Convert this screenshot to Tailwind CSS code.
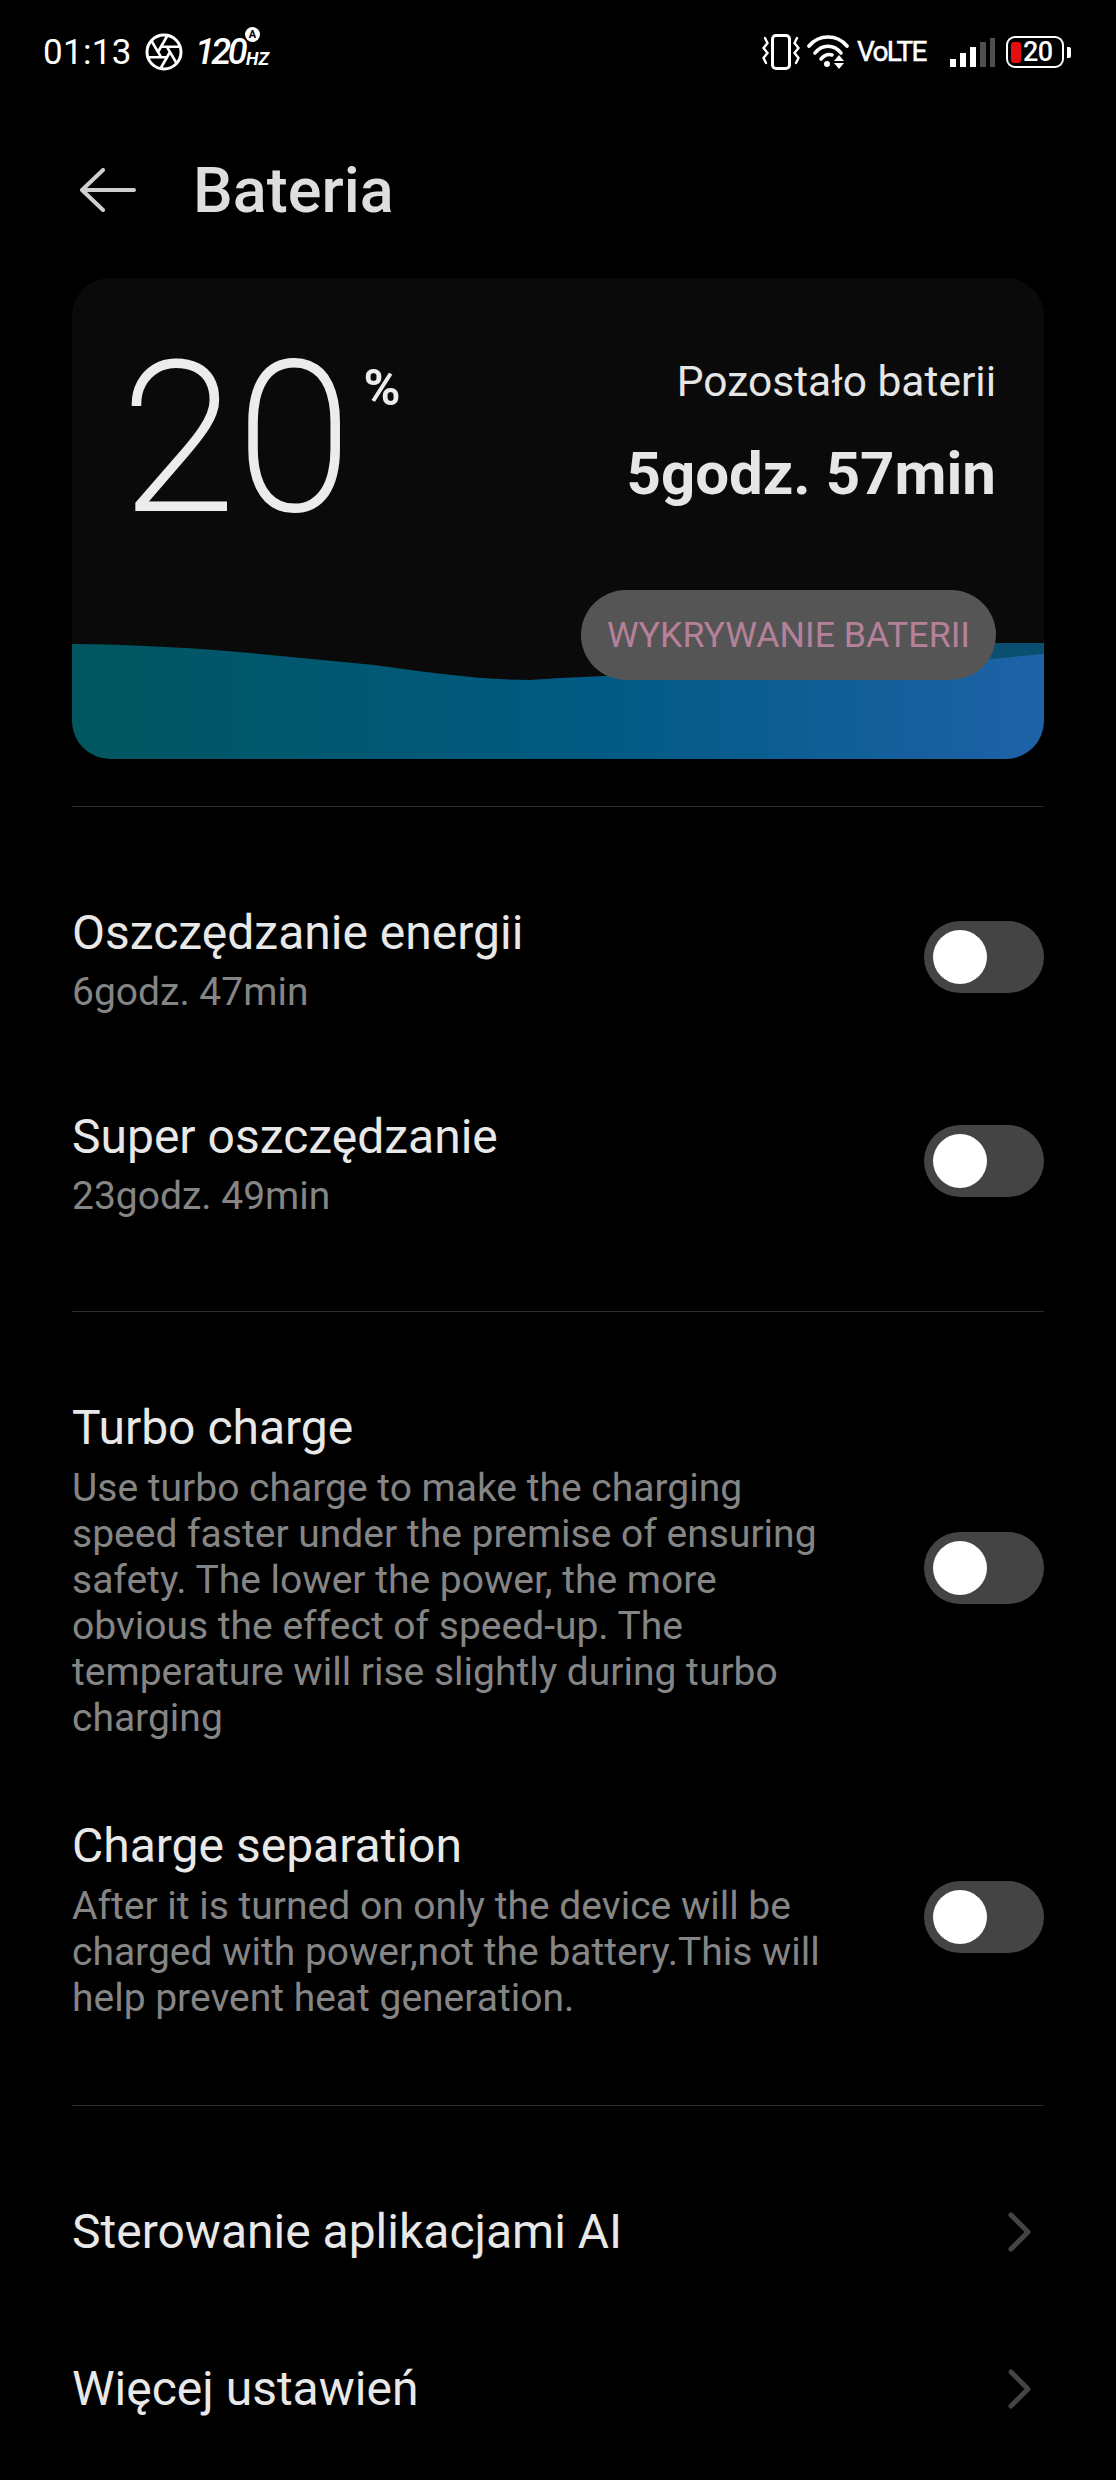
<!DOCTYPE html>
<html lang="pl">
<head>
  <meta charset="UTF-8" />
  <title>Bateria</title>
  <script src="https://cdn.jsdelivr.net/npm/@tailwindcss/browser@4"></script>
</head>
<body class="bg-black min-h-screen font-['Roboto',sans-serif] text-[#e8e8e8] overflow-hidden">

  <!-- Status bar -->
  <div class="h-[104px] flex items-center justify-between pl-[43px] pr-[45px] text-white">
    <div class="flex items-center">
      <span class="text-[35px] leading-none tracking-[0.3px] w-[102px]">01:13</span>
      <svg class="w-[38px] h-[38px]" viewBox="0 0 38 38" fill="none" stroke="#fff" stroke-width="3">
        <circle cx="19" cy="19" r="17" />
        <g stroke-width="2.6">
          <path d="M22 13.8 L32 31" />
          <path d="M22 13.8 L32 31" transform="rotate(60 19 19)" />
          <path d="M22 13.8 L32 31" transform="rotate(120 19 19)" />
          <path d="M22 13.8 L32 31" transform="rotate(180 19 19)" />
          <path d="M22 13.8 L32 31" transform="rotate(240 19 19)" />
          <path d="M22 13.8 L32 31" transform="rotate(300 19 19)" />
        </g>
      </svg>
      <div class="relative ml-[12px] flex items-end h-[30px] w-[72px]">
        <span class="text-[36px] leading-[30px] italic font-medium tracking-[-3.5px]">120</span>
        <span class="ml-[2px] text-[18px] leading-[16px] italic font-bold">HZ</span>
        <span class="absolute right-[7px] top-[-10px] w-[15px] h-[15px] rounded-full bg-white text-black text-[11px] leading-[15px] font-bold text-center">A</span>
      </div>
    </div>
    <div class="flex items-center">
      <svg class="w-[38px] h-[36px]" viewBox="0 0 38 36" fill="none" stroke="#fff" stroke-width="3" stroke-linecap="round">
        <rect x="10.5" y="1.5" width="17" height="33" rx="3.5" />
        <path d="M3 4 L5.5 9 L1.5 14 L5.5 19 L1.5 24 L4 29 M35 4 L32.5 9 L36.5 14 L32.5 19 L36.5 24 L34 29" stroke-width="2.4" />
      </svg>
      <svg class="w-[42px] h-[34px] ml-[7px]" viewBox="0 0 42 34" fill="none" stroke="#fff" stroke-width="3.6" stroke-linecap="round">
        <path d="M2 11 C12 -1 30 -1 40 11" />
        <path d="M8 18 C15 9 27 9 34 18" />
        <path d="M14 24 C17.5 20 22 19 25 20" />
        <circle cx="20" cy="29" r="3" fill="#fff" stroke="none" />
        <path d="M32 20 L37 26 H27 Z M27 28 H37 L32 34 Z" fill="#fff" stroke="none" />
      </svg>
      <span class="ml-[8px] w-[71px] text-[28px] leading-none font-normal tracking-[-1.7px] [-webkit-text-stroke:0.5px_#fff]">VoLTE</span>
      <svg class="w-[46px] h-[29px] ml-[22px]" viewBox="0 0 46 29" fill="#fff">
        <rect x="0" y="21" width="6" height="8" />
        <rect x="10" y="15" width="6" height="14" />
        <rect x="20" y="9" width="6" height="20" />
        <rect x="30" y="4" width="6" height="25" fill="#4f4f4f" />
        <rect x="40" y="0" width="5" height="29" fill="#4f4f4f" />
      </svg>
      <div class="relative ml-[10px] w-[58px] h-[32px] rounded-[9px] border-[2.5px] border-white flex items-center">
        <span class="ml-[3px] w-[10px] h-[21px] rounded-[3px] bg-[#e50d0d]"></span>
        <span class="ml-[2px] text-[27px] leading-none font-medium tracking-[-0.5px]">20</span>
      </div>
      <span class="ml-[3px] w-[4px] h-[11px] rounded-r-[2px] bg-white"></span>
    </div>
  </div>

  <!-- Header -->
  <div class="h-[172px] flex items-center pl-[80px]">
    <svg class="w-[56px] h-[44px]" viewBox="0 0 56 44" fill="none" stroke="#cfcfcf" stroke-width="4" stroke-linecap="round" stroke-linejoin="round">
      <path d="M54 22 H2 M23 2 L2 22 L23 42" />
    </svg>
    <h1 class="ml-[57px] text-[63px] leading-none font-medium text-[#dedede]">Bateria</h1>
  </div>

  <div class="px-[72px]">

    <!-- Battery card -->
    <div class="relative h-[481px] mt-[2px] rounded-[38px] bg-[#0a0a0a] overflow-hidden">
      <svg class="absolute left-0 bottom-0 w-[972px] h-[116px]" viewBox="0 0 972 116" preserveAspectRatio="none">
        <defs>
          <linearGradient id="wave" x1="0" x2="1" y1="0" y2="0">
            <stop offset="0" stop-color="#01565f" />
            <stop offset="0.55" stop-color="#015a84" />
            <stop offset="1" stop-color="#1e62a8" />
          </linearGradient>
        </defs>
        <path d="M800 0 H972 V40 H800 Z" fill="#0b4f70" />
        <path d="M0 1 C60 1.5 130 5 198 12 L302 22 C360 30 410 37 458 37 L488 35 L918 16 L972 11 V116 H0 Z" fill="url(#wave)" />
      </svg>

      <div class="relative flex justify-between">
        <div class="flex items-start pl-[50px] pt-[58px]">
          <span class="text-[206px] leading-[206px] font-thin text-[#ececec] tracking-[3px] [-webkit-text-stroke:4px_#ececec]">20</span>
          <span class="ml-[10px] mt-[22px] text-[50px] leading-[60px] font-bold text-[#ececec]">%</span>
        </div>
        <div class="flex flex-col items-end pr-[48px] pt-[80px]">
          <span class="text-[42.5px] leading-[48px] text-[#e6e6e6]">Pozostało baterii</span>
          <span class="mt-[33px] text-[60px] leading-[70px] font-bold text-[#e6e6e6]">5godz. 57min</span>
          <span class="mt-[81px] h-[90px] w-[415px] rounded-[45px] bg-[#555555] text-[#b5819a] text-[35.7px] leading-[90px] text-center">WYKRYWANIE BATERII</span>
        </div>
      </div>
    </div>

    <div class="mt-[47px] h-px bg-[#2c2c2c]"></div>

    <!-- Power saving -->
    <div class="mt-[99px] flex items-center justify-between">
      <div>
        <div class="text-[48px] leading-[54px]">Oszczędzanie energii</div>
        <div class="mt-[9px] text-[39px] leading-[46px] text-[#858585]">6godz. 47min</div>
      </div>
      <div class="mb-[7px] w-[120px] h-[72px] rounded-full bg-[#444444] pl-[9px] pt-[9px]"><div class="w-[54px] h-[54px] rounded-full bg-white"></div></div>
    </div>
    <div class="mt-[95px] flex items-center justify-between">
      <div>
        <div class="text-[48px] leading-[54px]">Super oszczędzanie</div>
        <div class="mt-[9px] text-[39px] leading-[46px] text-[#858585]">23godz. 49min</div>
      </div>
      <div class="mb-[7px] w-[120px] h-[72px] rounded-full bg-[#444444] pl-[9px] pt-[9px]"><div class="w-[54px] h-[54px] rounded-full bg-white"></div></div>
    </div>

    <div class="mt-[92px] h-px bg-[#2c2c2c]"></div>

    <!-- Charging -->
    <div class="mt-[89px] flex items-center justify-between">
      <div class="w-[790px]">
        <div class="text-[48px] leading-[54px]">Turbo charge</div>
        <div class="mt-[10px] text-[39px] leading-[46px] text-[#858585]">Use turbo charge to make the charging<br>speed faster under the premise of ensuring<br>safety. The lower the power, the more<br>obvious the effect of speed-up. The<br>temperature will rise slightly during turbo<br>charging</div>
      </div>
      <div class="mb-[6px] w-[120px] h-[72px] rounded-full bg-[#444444] pl-[9px] pt-[9px]"><div class="w-[54px] h-[54px] rounded-full bg-white"></div></div>
    </div>
    <div class="mt-[78px] flex items-center justify-between">
      <div class="w-[790px]">
        <div class="text-[48px] leading-[54px]">Charge separation</div>
        <div class="mt-[10px] text-[39px] leading-[46px] text-[#858585]">After it is turned on only the device will be<br>charged with power,not the battery.This will<br>help prevent heat generation.</div>
      </div>
      <div class="mb-[6px] w-[120px] h-[72px] rounded-full bg-[#444444] pl-[9px] pt-[9px]"><div class="w-[54px] h-[54px] rounded-full bg-white"></div></div>
    </div>

    <div class="mt-[84px] h-px bg-[#2c2c2c]"></div>

    <!-- Links -->
    <div class="mt-[101px] h-[50px] flex items-center justify-between">
      <span class="text-[48px] leading-[54px]">Sterowanie aplikacjami AI</span>
      <svg class="w-[24px] h-[40px] mr-[12px]" viewBox="0 0 24 40" fill="none" stroke="#444444" stroke-width="5" stroke-linecap="round" stroke-linejoin="round"><path d="M3 3 L20 20 L3 37" /></svg>
    </div>
    <div class="mt-[107px] h-[50px] flex items-center justify-between">
      <span class="text-[48px] leading-[54px]">Więcej ustawień</span>
      <svg class="w-[24px] h-[40px] mr-[12px]" viewBox="0 0 24 40" fill="none" stroke="#444444" stroke-width="5" stroke-linecap="round" stroke-linejoin="round"><path d="M3 3 L20 20 L3 37" /></svg>
    </div>
  </div>

</body>
</html>
